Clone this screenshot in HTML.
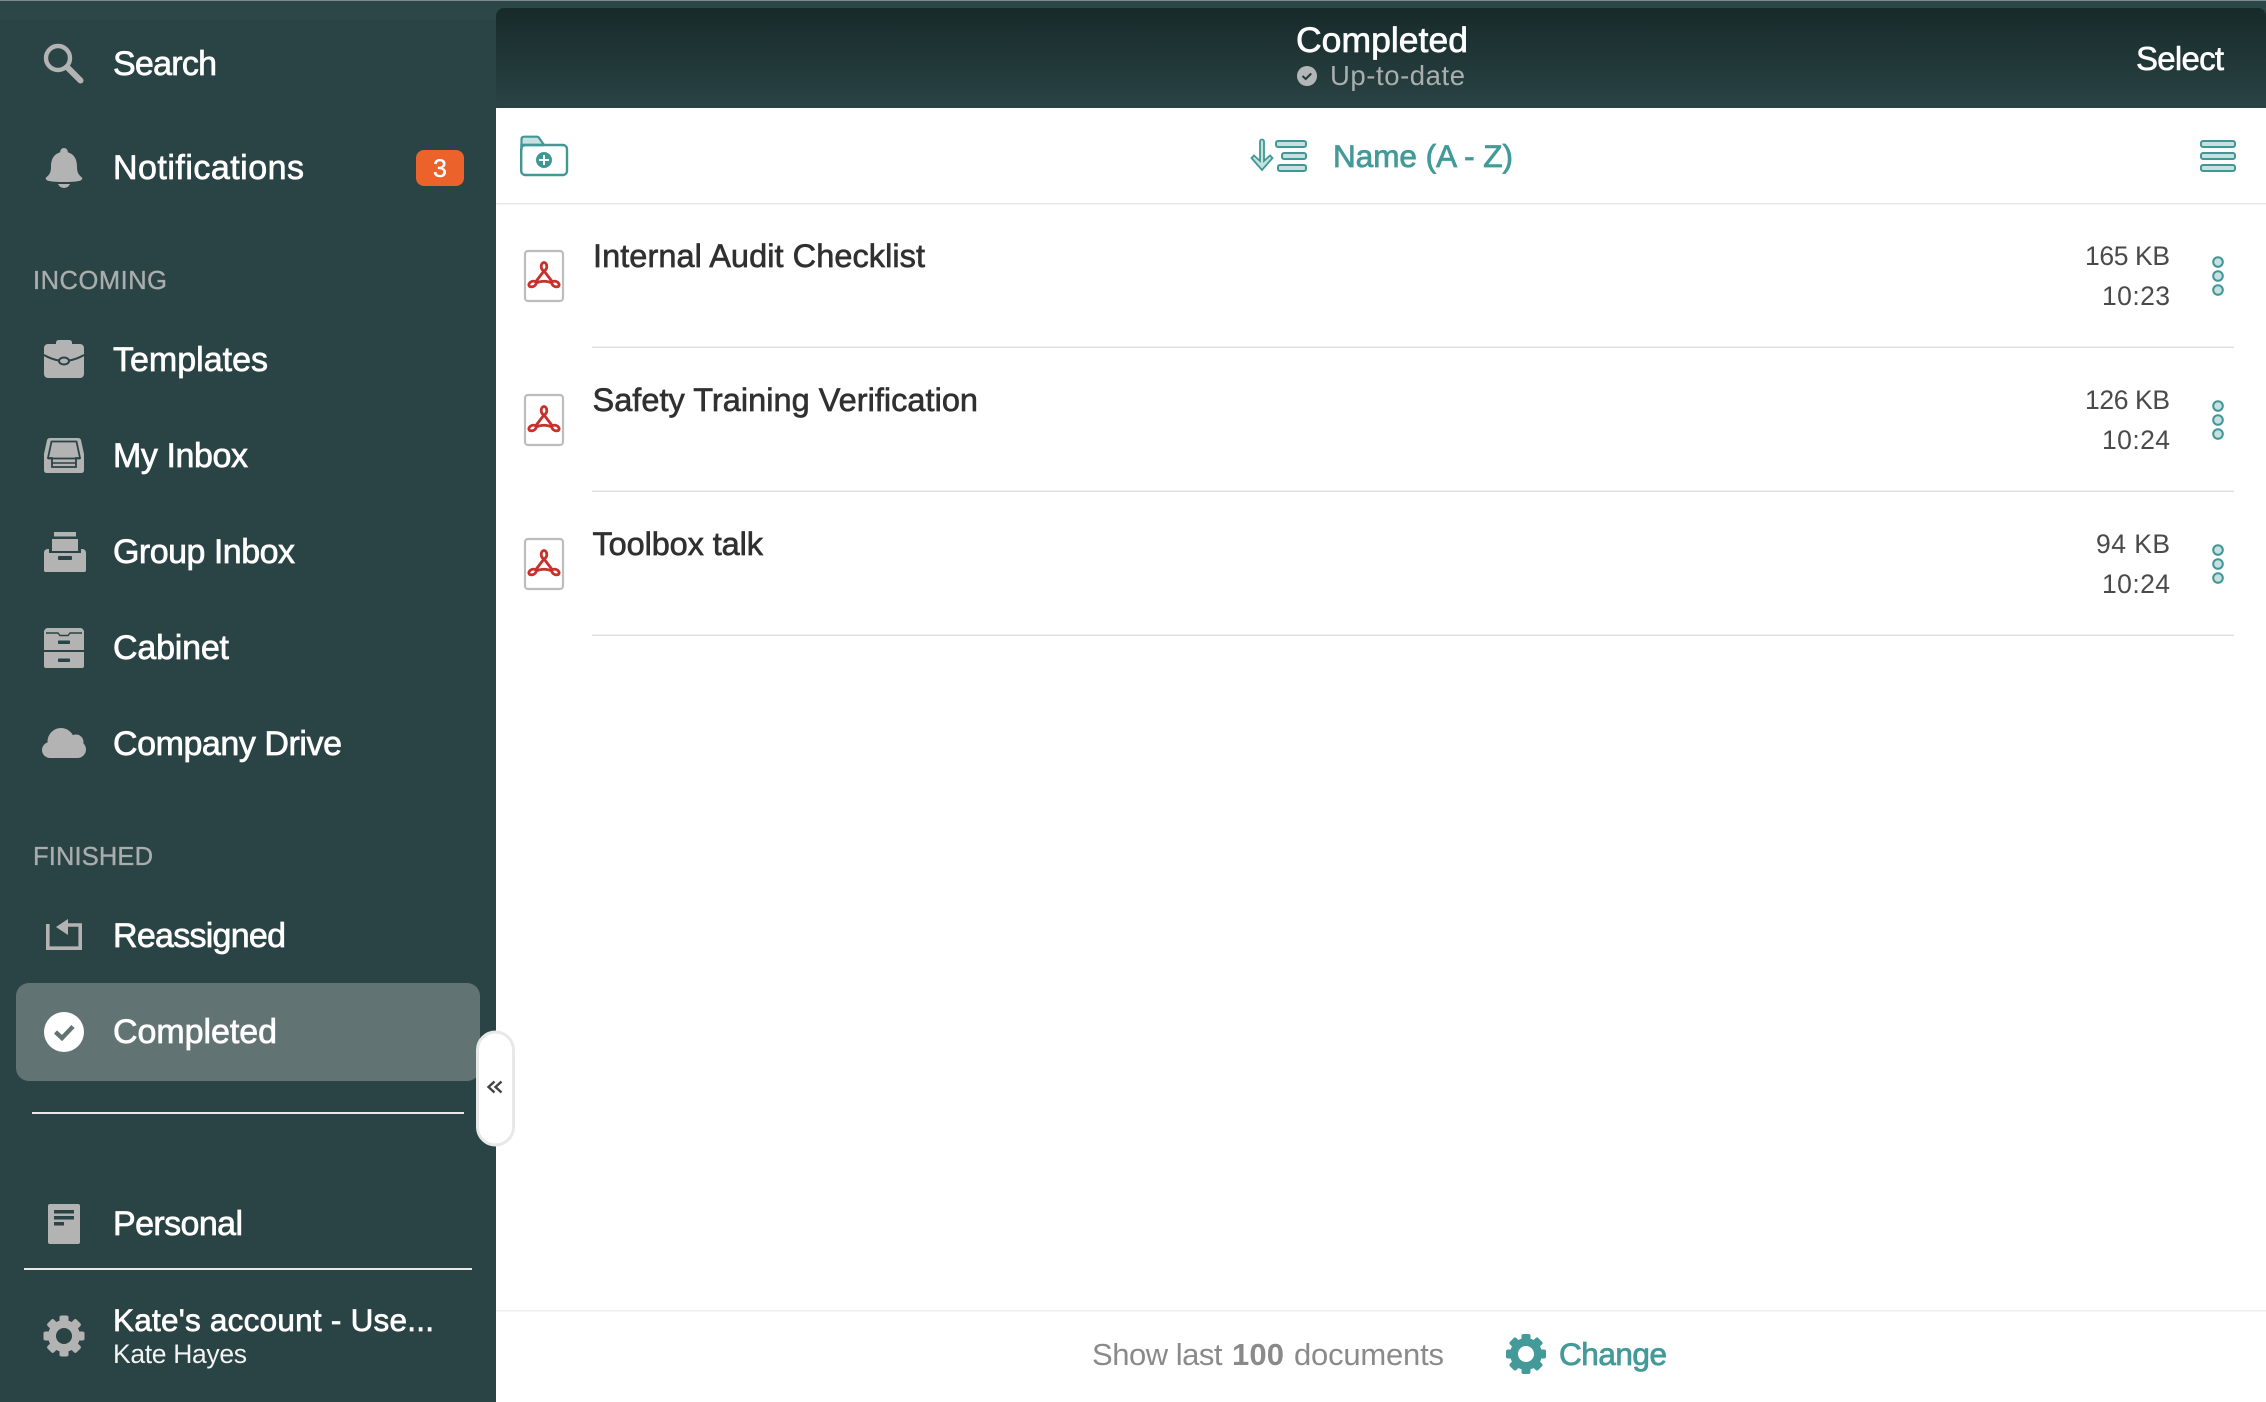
<!DOCTYPE html>
<html lang="en">
<head>
<meta charset="utf-8">
<title>Completed</title>
<style>
html,body{margin:0;padding:0;width:2266px;height:1402px;overflow:hidden;background:#fff}
svg{display:block}
text{font-family:"Liberation Sans",sans-serif}
.n{font-size:34px;fill:#fff;stroke:#fff;stroke-width:.7}
.s{font-size:25.5px;fill:#a9adad;stroke:#a9adad;stroke-width:.35}
.t{font-size:32.5px;fill:#303030;stroke:#303030;stroke-width:.65}
.m{font-size:26.5px;fill:#4a4a4a}
.g{fill:#b3b3b3}
.d{fill:#2a4344}
</style>
</head>
<body>
<svg width="2266" height="1402" viewBox="0 0 2266 1402" xmlns="http://www.w3.org/2000/svg">
<defs>
<linearGradient id="hd" x1="0" y1="0" x2="0" y2="1"><stop offset="0" stop-color="#172a2a"/><stop offset="1" stop-color="#2a4344"/></linearGradient>
</defs>
<rect width="2266" height="1402" fill="#fff"/>
<rect width="496" height="1402" fill="#2a4344"/>
<rect width="2266" height="20" fill="#2d4648"/>
<rect width="2266" height="1" fill="#7b8d8c"/>
<path d="M496 108V16a8 8 0 0 1 8-8H2258a8 8 0 0 1 8 8V108z" fill="url(#hd)"/>

<!-- Sidebar icons -->
<circle cx="58" cy="58" r="12" fill="none" stroke="#b3b3b3" stroke-width="4.400"/>
<path d="M68 68L80.500 80.500" stroke="#b3b3b3" stroke-width="6" stroke-linecap="round"/>

<path class="g" d="M64 148c-2.400 0-3.800 1.800-3.800 4.200C53 154.500 51 160 51 167c0 5-1.500 8-5 10.500-.6.500-.4 2.500 2 3.200 4 1 10 1.300 16 1.300s12-.3 16-1.300c2.400-.7 2.600-2.700 2-3.200-3.500-2.500-5-5.500-5-10.500 0-7-2-12.500-9.200-14.800 0-2.400-1.400-4.200-3.800-4.200z"/>
<path class="g" d="M58 184h12c-1 2.500-3.500 4-6 4s-5-1.500-6-4z"/>

<path class="g" d="M56 344v-1c0-2 1-3 3-3h10c2 0 3 1 3 3v1z"/>
<rect class="g" x="44" y="344" width="40" height="34" rx="4"/>
<path d="M44 355c6 3.500 11 5 15.500 5.500M68.500 360.500c4.500-.5 9.500-2 15.500-5.500" fill="none" stroke="#2a4344" stroke-width="2"/>
<ellipse cx="64" cy="361" rx="5" ry="3.500" fill="#b3b3b3" stroke="#2a4344" stroke-width="2"/>

<path class="g" d="M50 438h28c1.500 0 2.500.8 3 2l3 14v16c0 2-1 3-3 3H47c-2 0-3-1-3-3v-16l3-14c.5-1.200 1.500-2 3-2z"/>
<path d="M51.500 441.500h25l3.500 16.500h-4v9H52v-9h-4z" fill="#b3b3b3" stroke="#2a4344" stroke-width="1.800"/>
<path d="M48 458.500h32" stroke="#2a4344" stroke-width="1.800"/>
<path d="M52 463h24" stroke="#2a4344" stroke-width="1.500"/>

<rect class="g" x="54" y="532" width="22" height="4.500"/>
<rect class="g" x="52" y="539" width="26" height="12"/>
<path class="g" d="M48 549h1v4h32v-4h1c2 0 4 1 4 4v17c0 1.500-.5 2-2 2H46c-1.500 0-2-.5-2-2v-17c0-3 2-4 4-4z"/>
<rect class="d" x="58" y="556" width="14" height="4" rx="1"/>

<path class="g" d="M48 628h32c2 0 3 1 4 3v19H44v-19c1-2 2-3 4-3z"/>
<path d="M46 633h12l2 2.500h8l2-2.500h12" fill="none" stroke="#2a4344" stroke-width="1.400"/>
<rect class="d" x="58" y="640.500" width="12" height="3.500" rx=".8"/>
<path class="g" d="M44 652h40v14c0 1.500-.8 2-2 2H46c-1.200 0-2-.5-2-2z"/>
<rect class="d" x="58" y="658.500" width="12" height="3.500" rx=".8"/>

<circle class="g" cx="61" cy="741.500" r="13.500"/>
<circle class="g" cx="50" cy="750" r="8"/>
<circle class="g" cx="76" cy="742" r="7.500"/>
<circle class="g" cx="77.500" cy="749.500" r="8.500"/>
<rect class="g" x="50" y="745" width="28" height="13"/>

<path d="M47.800 924V948.200H80.200V925H66" fill="none" stroke="#b3b3b3" stroke-width="3.600"/>
<path class="g" d="M56 927l12-8v16z"/>

<rect x="16" y="983" width="464" height="98" rx="13" fill="#617473"/>
<circle cx="64" cy="1032" r="20" fill="#fff"/>
<path d="M55.500 1032l6.500 6 11-11.500" fill="none" stroke="#617473" stroke-width="4.400"/>

<rect x="32" y="1112" width="432" height="2" fill="#e8e8e8"/>
<rect class="g" x="48" y="1204" width="32" height="40" rx="2"/>
<rect class="d" x="54" y="1210" width="20" height="3.500"/>
<rect class="d" x="54" y="1216" width="20" height="3.500"/>
<rect class="d" x="54" y="1222" width="10" height="3.500"/>
<rect x="24" y="1268" width="448" height="2" fill="#e8e8e8"/>

<g transform="translate(64 1336)" fill="#b3b3b3">
<circle r="16"/>
<rect x="-4.500" y="-20.500" width="9" height="41" rx="2"/>
<rect x="-4.500" y="-20.500" width="9" height="41" rx="2" transform="rotate(45)"/>
<rect x="-4.500" y="-20.500" width="9" height="41" rx="2" transform="rotate(90)"/>
<rect x="-4.500" y="-20.500" width="9" height="41" rx="2" transform="rotate(135)"/>
<circle r="8" fill="#2a4344"/>
</g>

<!-- Sidebar text -->
<text class="n" x="113" y="75" textLength="104">Search</text>
<text class="n" x="113" y="179" textLength="191">Notifications</text>
<rect x="416" y="150" width="48" height="36" rx="8" fill="#ec622b"/>
<text x="440" y="177" font-size="25" fill="#fff" stroke="#fff" stroke-width=".4" text-anchor="middle">3</text>
<text class="s" x="33" y="289" textLength="134">INCOMING</text>
<text class="n" x="113" y="371" textLength="155">Templates</text>
<text class="n" x="113" y="467" textLength="135">My Inbox</text>
<text class="n" x="113" y="563" textLength="182">Group Inbox</text>
<text class="n" x="113" y="659" textLength="116">Cabinet</text>
<text class="n" x="113" y="755" textLength="229">Company Drive</text>
<text class="s" x="33" y="865" textLength="120">FINISHED</text>
<text class="n" x="113" y="947" textLength="173">Reassigned</text>
<text class="n" x="113" y="1043" textLength="164">Completed</text>
<text class="n" x="113" y="1235" textLength="130">Personal</text>
<text class="n" x="113" y="1331" textLength="321" style="font-size:31.500px">Kate's account - Use...</text>
<text x="113" y="1363" font-size="26.500" fill="#f2f4f4" textLength="134">Kate Hayes</text>

<!-- Collapse handle -->
<rect x="477.500" y="1032" width="36" height="113" rx="18" fill="#fff" stroke="#e8e8e8" stroke-width="3"/>
<path d="M494.500 1081.500l-6 5.500 6 5.500M501.500 1081.500l-6 5.500 6 5.500" fill="none" stroke="#444" stroke-width="2.400"/>

<!-- Header -->
<text x="1296" y="52" font-size="35.500" fill="#fff" stroke="#fff" stroke-width=".7" textLength="172">Completed</text>
<circle cx="1307" cy="76" r="10" fill="#b3b6b6"/>
<path d="M1302.500 76l3.200 3 5.500-5.500" fill="none" stroke="#22393a" stroke-width="2"/>
<text x="1330" y="85" font-size="27.500" fill="#a9aeae" textLength="135">Up-to-date</text>
<text x="2136" y="70" font-size="33" fill="#fff" stroke="#fff" stroke-width=".6" textLength="88">Select</text>

<!-- Toolbar -->
<path d="M521.500 146v-6.500c0-1.800 1-2.800 2.800-2.800h12.500c1 0 1.700.4 2.200 1.100l5 7.200z" fill="#c8e1e0" stroke="#3f9896" stroke-width="2.200"/>
<rect x="521.200" y="145" width="45.800" height="30" rx="4" fill="#fff" stroke="#3f9896" stroke-width="2.400"/>
<path d="M521.500 150v-5h22" fill="none" stroke="#3f9896" stroke-width="2.400"/>
<circle cx="544" cy="160" r="8" fill="#3f9896"/>
<path d="M544 155v10M539 160h10" stroke="#fff" stroke-width="2"/>

<path d="M1260 142a2 2 0 0 1 4 0v19.500l6-5.500 2.500 2.500-10.500 12-10.500-12 2.500-2.500 6 5.500z" fill="#c8e1e0" stroke="#3f9896" stroke-width="1.800" transform="translate(0 -.5)"/>
<rect x="1276" y="141" width="30" height="6" rx="2" fill="#c8e1e0" stroke="#3f9896" stroke-width="2"/>
<rect x="1282" y="153" width="24" height="6" rx="2" fill="#c8e1e0" stroke="#3f9896" stroke-width="2"/>
<rect x="1278" y="165" width="28" height="6" rx="2" fill="#c8e1e0" stroke="#3f9896" stroke-width="2"/>
<text x="1333" y="167" font-size="31.500" fill="#439a98" stroke="#439a98" stroke-width=".8" textLength="180">Name (A - Z)</text>

<rect x="2201" y="141" width="34" height="6" rx="2" fill="#c8e1e0" stroke="#3f9896" stroke-width="2"/>
<rect x="2201" y="153" width="34" height="6" rx="2" fill="#c8e1e0" stroke="#3f9896" stroke-width="2"/>
<rect x="2201" y="165" width="34" height="6" rx="2" fill="#c8e1e0" stroke="#3f9896" stroke-width="2"/>
<rect x="496" y="203" width="1770" height="1.500" fill="#e8e8e8"/>

<!-- Row 1 -->
<g>
<rect x="525" y="251" width="38" height="50" rx="3" fill="#fff" stroke="#bdbdbd" stroke-width="2.200"/>
<g fill="none" stroke="#c9302c" stroke-width="2.800">
<ellipse cx="544" cy="266.500" rx="2.800" ry="4"/>
<ellipse cx="532.500" cy="284" rx="3.800" ry="2.600" transform="rotate(-25 532.500 284)"/>
<ellipse cx="555.500" cy="284" rx="3.800" ry="2.600" transform="rotate(25 555.500 284)"/>
<path d="M544 271L535.500 282M544 271L552.500 282M536 283Q544 279.500 552 283"/>
</g>
<circle cx="2218" cy="262" r="4.800" fill="#c8e1e0" stroke="#3f9896" stroke-width="2"/>
<circle cx="2218" cy="276" r="4.800" fill="#c8e1e0" stroke="#3f9896" stroke-width="2"/>
<circle cx="2218" cy="290" r="4.800" fill="#c8e1e0" stroke="#3f9896" stroke-width="2"/>
<rect x="592" y="346.500" width="1642" height="1.500" fill="#e0e0e0"/>
</g>
<text class="t" x="593" y="267" textLength="332">Internal Audit Checklist</text>
<text class="m" x="2085" y="265" textLength="85">165 KB</text>
<text class="m" x="2102" y="305" textLength="68">10:23</text>

<!-- Row 2 -->
<g transform="translate(0 144)">
<rect x="525" y="251" width="38" height="50" rx="3" fill="#fff" stroke="#bdbdbd" stroke-width="2.200"/>
<g fill="none" stroke="#c9302c" stroke-width="2.800">
<ellipse cx="544" cy="266.500" rx="2.800" ry="4"/>
<ellipse cx="532.500" cy="284" rx="3.800" ry="2.600" transform="rotate(-25 532.500 284)"/>
<ellipse cx="555.500" cy="284" rx="3.800" ry="2.600" transform="rotate(25 555.500 284)"/>
<path d="M544 271L535.500 282M544 271L552.500 282M536 283Q544 279.500 552 283"/>
</g>
<circle cx="2218" cy="262" r="4.800" fill="#c8e1e0" stroke="#3f9896" stroke-width="2"/>
<circle cx="2218" cy="276" r="4.800" fill="#c8e1e0" stroke="#3f9896" stroke-width="2"/>
<circle cx="2218" cy="290" r="4.800" fill="#c8e1e0" stroke="#3f9896" stroke-width="2"/>
<rect x="592" y="346.500" width="1642" height="1.500" fill="#e0e0e0"/>
</g>
<text class="t" x="592.500" y="411" textLength="385.500">Safety Training Verification</text>
<text class="m" x="2085" y="409" textLength="85">126 KB</text>
<text class="m" x="2102" y="449" textLength="68">10:24</text>

<!-- Row 3 -->
<g transform="translate(0 288)">
<rect x="525" y="251" width="38" height="50" rx="3" fill="#fff" stroke="#bdbdbd" stroke-width="2.200"/>
<g fill="none" stroke="#c9302c" stroke-width="2.800">
<ellipse cx="544" cy="266.500" rx="2.800" ry="4"/>
<ellipse cx="532.500" cy="284" rx="3.800" ry="2.600" transform="rotate(-25 532.500 284)"/>
<ellipse cx="555.500" cy="284" rx="3.800" ry="2.600" transform="rotate(25 555.500 284)"/>
<path d="M544 271L535.500 282M544 271L552.500 282M536 283Q544 279.500 552 283"/>
</g>
<circle cx="2218" cy="262" r="4.800" fill="#c8e1e0" stroke="#3f9896" stroke-width="2"/>
<circle cx="2218" cy="276" r="4.800" fill="#c8e1e0" stroke="#3f9896" stroke-width="2"/>
<circle cx="2218" cy="290" r="4.800" fill="#c8e1e0" stroke="#3f9896" stroke-width="2"/>
<rect x="592" y="346.500" width="1642" height="1.500" fill="#e0e0e0"/>
</g>
<text class="t" x="592.500" y="555" textLength="170.500">Toolbox talk</text>
<text class="m" x="2096" y="553" textLength="74">94 KB</text>
<text class="m" x="2102" y="593" textLength="68">10:24</text>

<!-- Footer -->
<rect x="496" y="1310" width="1770" height="1.500" fill="#ececec"/>
<text x="1092" y="1365" font-size="31" fill="#8a8a8a" textLength="130.500">Show last</text>
<text x="1232" y="1365" font-size="31" font-weight="bold" fill="#8a8a8a" textLength="52">100</text>
<text x="1294" y="1365" font-size="31" fill="#8a8a8a" textLength="150">documents</text>
<g transform="translate(1526 1354)" fill="#439a98">
<circle r="16"/>
<rect x="-4.500" y="-20" width="9" height="40" rx="2"/>
<rect x="-4.500" y="-20" width="9" height="40" rx="2" transform="rotate(45)"/>
<rect x="-4.500" y="-20" width="9" height="40" rx="2" transform="rotate(90)"/>
<rect x="-4.500" y="-20" width="9" height="40" rx="2" transform="rotate(135)"/>
<circle r="8" fill="#fff"/>
</g>
<text x="1559" y="1365" font-size="31.500" fill="#439a98" stroke="#439a98" stroke-width=".8" textLength="108">Change</text>
</svg>
</body>
</html>
